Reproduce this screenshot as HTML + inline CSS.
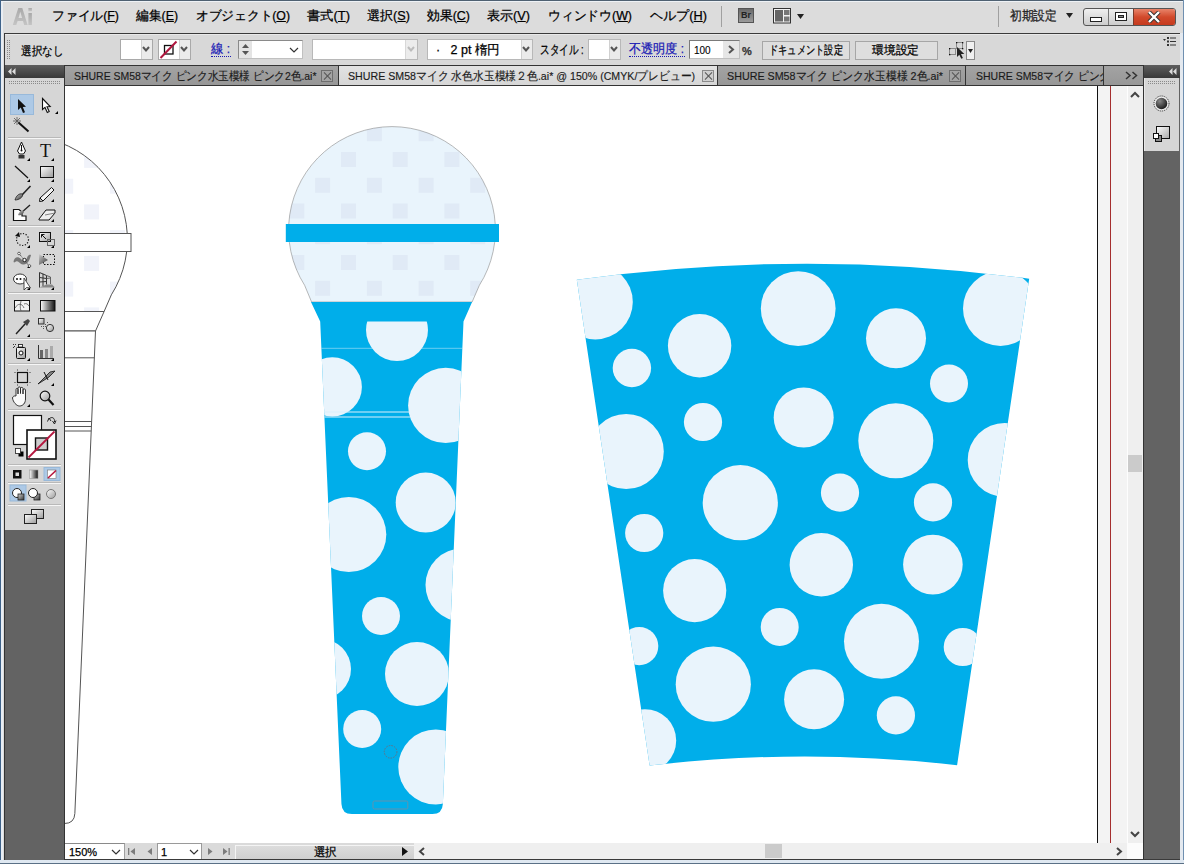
<!DOCTYPE html>
<html><head><meta charset="utf-8">
<style>
*{margin:0;padding:0;box-sizing:border-box}
html,body{width:1184px;height:864px;overflow:hidden;background:#dadada;font-family:"Liberation Sans",sans-serif;font-size:12px;color:#111}
.a{position:absolute}
.menu{top:9px;font-size:12.6px;color:#000;-webkit-text-stroke:0.25px #000;white-space:nowrap;line-height:15px}
.menu u{text-decoration:underline}
.tab{top:66px;height:19px;font-size:11.8px;color:#1a1a1a;-webkit-text-stroke:0.15px #1a1a1a;white-space:nowrap;overflow:hidden;line-height:20px}
.f{display:inline-block;transform-origin:0 50%;white-space:nowrap}
.cls{position:absolute;top:4px;width:12px;height:12px;border:1px solid #6e6e6e;background:#a4a4a4}
.cls:before,.cls:after{content:"";position:absolute;left:5px;top:0px;width:1px;height:10px;background:#555;transform:rotate(45deg)}
.cls:after{transform:rotate(-45deg)}
.hdr{background:linear-gradient(#5e5e5e,#383838)}
.wbox{background:#fff;border:1px solid #a9a9a9}
.dd{background:#ebebeb}
.lbl{font-size:12px;white-space:nowrap;line-height:14px;color:#000;-webkit-text-stroke:0.25px currentColor}
.blue{color:#1a1ab4;border-bottom:1px dotted #1a1ab4}
.btn{background:#dedede;border:1px solid #a6a6a6;text-align:center;font-size:12px;line-height:17px;color:#000;-webkit-text-stroke:0.25px #000}
.grip{background:repeating-linear-gradient(180deg,transparent 0 1px,#d6d6d6 1px 2px),repeating-linear-gradient(90deg,#8a8a8a 0 1px,transparent 1px 2px)}
.sep{height:1px;background:#f4f4f4;border-top:1px solid #b8b8b8}
.tri{position:absolute;width:0;height:0;border-left:4px solid transparent;border-bottom:4px solid #000}
</style></head><body>
<!-- window frame -->
<div class="a" style="left:0;top:0;width:1184px;height:864px;background:#dcdcdc"></div>
<div class="a" style="left:0;top:0;width:1184px;height:1px;background:#4f6172"></div>
<div class="a" style="left:0;top:0;width:1px;height:864px;background:#3e6289"></div>
<div class="a" style="left:1px;top:1px;width:2px;height:862px;background:#e8edf3"></div>
<div class="a" style="left:1px;top:1px;width:1182px;height:1px;background:#eef2f6"></div>
<div class="a" style="left:1180px;top:33px;width:3px;height:830px;background:#e4e9ef"></div>
<div class="a" style="left:1183px;top:0;width:1px;height:864px;background:#6f8fb0"></div>
<div class="a" style="left:0;top:860px;width:1184px;height:3px;background:#dfe8f1"></div>
<div class="a" style="left:0;top:863px;width:1184px;height:1px;background:#5a7086"></div>

<!-- menu bar -->
<svg class="a" style="left:12px;top:7px" width="24" height="20" viewBox="0 0 24 20">
<defs><linearGradient id="aig" x1="0" y1="0" x2="0" y2="1"><stop offset="0" stop-color="#a9a9a9"/><stop offset="1" stop-color="#c4c4c4"/></linearGradient></defs>
<path d="M0.8 18 L6.3 1 L10.3 1 L15.6 18 L12.2 18 L11 14 L5.6 14 L4.3 18Z M6.5 11 L10.1 11 L8.3 4.8Z" fill="url(#aig)"/>
<rect x="16.4" y="6" width="3.5" height="12" fill="url(#aig)"/>
<rect x="16.4" y="1" width="3.5" height="3.2" fill="url(#aig)"/>
</svg>
<div class="a menu" style="left:52px"><span class="f" id="m1" style="transform:scaleX(0.9837)">ファイル(<u>F</u>)</span></div>
<div class="a menu" style="left:136px"><span class="f" id="m2" style="transform:scaleX(0.9810)">編集(<u>E</u>)</span></div>
<div class="a menu" style="left:196px"><span class="f" id="m3" style="transform:scaleX(0.9771)">オブジェクト(<u>O</u>)</span></div>
<div class="a menu" style="left:307px"><span class="f" id="m4" style="transform:scaleX(1.0212)">書式(<u>T</u>)</span></div>
<div class="a menu" style="left:367px"><span class="f" id="m5" style="transform:scaleX(1.0044)">選択(<u>S</u>)</span></div>
<div class="a menu" style="left:427px"><span class="f" id="m6" style="transform:scaleX(0.9882)">効果(<u>C</u>)</span></div>
<div class="a menu" style="left:487px"><span class="f" id="m7" style="transform:scaleX(1.0044)">表示(<u>V</u>)</span></div>
<div class="a menu" style="left:548px"><span class="f" id="m8" style="transform:scaleX(0.9848)">ウィンドウ(<u>W</u>)</span></div>
<div class="a menu" style="left:650px"><span class="f" id="m9" style="transform:scaleX(1.0086)">ヘルプ(<u>H</u>)</span></div>
<div class="a" style="left:721px;top:6px;width:1px;height:21px;background:#a0a0a0"></div>
<!-- Br icon -->
<div class="a" style="left:738px;top:8px;width:16px;height:15px;background:linear-gradient(#6a6a6a,#9a9a9a);border:1px solid #555;color:#222;font-size:9px;font-weight:bold;line-height:13px;text-align:center">Br</div>
<!-- layout icon -->
<svg class="a" style="left:773px;top:8px" width="33" height="16" viewBox="0 0 33 16">
<rect x="0.5" y="0.5" width="17" height="14.5" fill="#f2f2f2" stroke="#333"/>
<rect x="2" y="2" width="8" height="11.5" fill="#666"/>
<rect x="11" y="2" width="5.5" height="5" fill="#777"/>
<rect x="11" y="8.5" width="5.5" height="5" fill="#777"/>
<path d="M24 6 L31 6 L27.5 11Z" fill="#222"/>
</svg>
<div class="a" style="left:998px;top:6px;width:1px;height:21px;background:#a0a0a0"></div>
<div class="a menu" style="left:1010px;color:#333"><span class="f" id="m10" style="transform:scaleX(0.9038)">初期設定</span></div>
<svg class="a" style="left:1066px;top:13px" width="8" height="6"><path d="M0 0 L7 0 L3.5 5Z" fill="#222"/></svg>
<!-- window buttons -->
<div class="a" style="left:1083px;top:8px;width:93px;height:18px;border:1px solid #555;border-radius:3px;background:linear-gradient(#f0f0f0,#cdcdcd);overflow:hidden">
 <div class="a" style="left:24px;top:0;width:1px;height:16px;background:#777"></div>
 <div class="a" style="left:49px;top:0;width:42px;height:16px;background:linear-gradient(#e8846a,#d24a2c 50%,#c53a1e);border-left:1px solid #7a3a2a"></div>
 <div class="a" style="left:6px;top:8px;width:12px;height:5px;background:#fff;border:1px solid #222"></div>
 <div class="a" style="left:31px;top:3px;width:12px;height:9px;background:#fff;border:1px solid #222"></div>
 <div class="a" style="left:34px;top:6px;width:6px;height:3px;background:#888;border:1px solid #222"></div>
 <svg class="a" style="left:63px;top:2px" width="14" height="12" viewBox="0 0 14 12"><path d="M2 1 L12 11 M12 1 L2 11" stroke="#333" stroke-width="4.2"/><path d="M2 1 L12 11 M12 1 L2 11" stroke="#fff" stroke-width="2.4"/></svg>
</div>

<!-- control bar -->
<div class="a" style="left:4px;top:33px;width:1176px;height:32px;background:#d8d8d8;border-top:1px solid #3a3a3a;border-left:1px solid #3a3a3a"></div>
<div class="a" style="left:5px;top:34px;width:1175px;height:1px;background:#e9e9e9"></div>
<div class="a grip" style="left:7px;top:40px;width:4px;height:20px"></div>
<div class="a lbl" style="left:21px;top:44px"><span class="f" id="c1" style="transform:scaleX(0.8750)">選択なし</span></div>
<!-- fill swatch -->
<div class="a wbox" style="left:120px;top:39px;width:33px;height:21px"></div>
<div class="a dd" style="left:141px;top:40px;width:11px;height:19px;border-left:1px solid #d0d0d0"></div>
<svg class="a" style="left:142px;top:46px" width="8" height="7"><path d="M1 1 L4 4.5 L7 1" stroke="#555" stroke-width="2" fill="none"/></svg>
<!-- stroke swatch -->
<div class="a wbox" style="left:158px;top:39px;width:33px;height:21px"></div>
<div class="a dd" style="left:179px;top:40px;width:11px;height:19px;border-left:1px solid #d0d0d0"></div>
<svg class="a" style="left:180px;top:46px" width="8" height="7"><path d="M1 1 L4 4.5 L7 1" stroke="#555" stroke-width="2" fill="none"/></svg>
<svg class="a" style="left:159px;top:40px" width="20" height="19" viewBox="0 0 20 19">
<rect x="5.5" y="5.5" width="8.5" height="8.5" fill="none" stroke="#111" stroke-width="1.3"/>
<path d="M1.5 18 L17.5 1.5" stroke="#b0163e" stroke-width="2"/>
</svg>
<div class="a lbl blue" style="left:211px;top:43px;font-size:12.5px;line-height:13px;width:20px"><span class="f" id="c2" style="transform:scaleX(0.9522)">線 :</span></div>
<!-- stroke weight -->
<div class="a wbox" style="left:238px;top:40px;width:65px;height:19px;border-color:#8a8a8a #c0c0c0 #c0c0c0 #8a8a8a"></div>
<div class="a dd" style="left:239px;top:41px;width:13px;height:17px;background:#e4e4e4"></div>
<svg class="a" style="left:241px;top:43px" width="9" height="13"><path d="M1 5 L4.5 1 L8 5Z M1 8 L8 8 L4.5 12Z" fill="#555"/></svg>
<svg class="a" style="left:289px;top:47px" width="10" height="7"><path d="M1 1 L5 5 L9 1" stroke="#333" stroke-width="1.2" fill="none"/></svg>
<!-- brush combo -->
<div class="a wbox" style="left:312px;top:39px;width:106px;height:21px;border-color:#b8b8b8"></div>
<div class="a dd" style="left:405px;top:40px;width:12px;height:19px;border-left:1px solid #d8d8d8;background:#ececec"></div>
<svg class="a" style="left:407px;top:46px" width="8" height="7"><path d="M1 1 L4 4.5 L7 1" stroke="#bcbcbc" stroke-width="2" fill="none"/></svg>
<!-- brush definition -->
<div class="a wbox" style="left:427px;top:39px;width:106px;height:21px;border-color:#b8b8b8"></div>
<div class="a dd" style="left:521px;top:40px;width:11px;height:19px;border-left:1px solid #d0d0d0"></div>
<svg class="a" style="left:522px;top:46px" width="8" height="7"><path d="M1 1 L4 4.5 L7 1" stroke="#555" stroke-width="2" fill="none"/></svg>
<div class="a lbl" style="left:436px;top:43px;font-size:13px"><span class="f" id="c3" style="transform:scaleX(0.9629)">·&nbsp;&nbsp; 2 pt 楕円</span></div>
<div class="a lbl" style="left:540px;top:43px;font-size:12.5px"><span class="f" id="c4" style="transform:scaleX(0.7396)">スタイル :</span></div>
<div class="a wbox" style="left:588px;top:39px;width:33px;height:21px;border-color:#b8b8b8"></div>
<div class="a dd" style="left:609px;top:40px;width:11px;height:19px;border-left:1px solid #d0d0d0"></div>
<svg class="a" style="left:610px;top:46px" width="8" height="7"><path d="M1 1 L4 4.5 L7 1" stroke="#555" stroke-width="2" fill="none"/></svg>
<div class="a lbl blue" style="left:629px;top:43px;font-size:12.5px;line-height:13px;width:56px"><span class="f" id="c5" style="transform:scaleX(0.9329)">不透明度 :</span></div>
<div class="a wbox" style="left:689px;top:40px;width:51px;height:19px;border-color:#7a7a7a #c0c0c0 #c0c0c0 #7a7a7a"></div>
<div class="a dd" style="left:723px;top:41px;width:16px;height:17px;background:#e6e6e6"></div>
<svg class="a" style="left:728px;top:45px" width="7" height="9"><path d="M1 1 L5 4.5 L1 8" stroke="#555" stroke-width="2" fill="none"/></svg>
<div class="a lbl" style="left:694px;top:44px;font-size:10px;-webkit-text-stroke:0.1px #000">100</div>
<div class="a lbl" style="left:742px;top:44px;font-size:11px;font-weight:bold;color:#333">%</div>
<div class="a btn" style="left:762px;top:41px;width:88px;height:19px;white-space:nowrap;text-align:left;padding-left:6px"><span class="f" id="c6" style="transform:scaleX(0.7708)">ドキュメント設定</span></div>
<div class="a btn" style="left:855px;top:41px;width:83px;height:19px;text-align:left;padding-left:16px"><span class="f" id="c7" style="transform:scaleX(0.9792)">環境設定</span></div>
<!-- isolate icon -->
<svg class="a" style="left:948px;top:41px" width="28" height="19" viewBox="0 0 28 19">
<rect x="1.5" y="7.5" width="6" height="6" fill="none" stroke="#8a8a8a"/>
<rect x="8.5" y="1.5" width="6" height="6" fill="none" stroke="#8a8a8a"/>
<g fill="#111"><rect x="1" y="7" width="1.3" height="1.3"/><rect x="1" y="13" width="1.3" height="1.3"/><rect x="8" y="1" width="1.3" height="1.3"/><rect x="14" y="1" width="1.3" height="1.3"/><rect x="14" y="7" width="1.3" height="1.3"/></g>
<path d="M9 6 L9 16 L11.3 13.8 L13.3 17.8 L14.9 17 L13 13 L16.3 13Z" fill="#222"/>
<rect x="18.5" y="0.5" width="8" height="18" fill="#f0f0f0" stroke="#8a8a8a"/>
<path d="M20 8 L25 8 L22.5 12Z" fill="#222"/>
</svg>
<!-- panel menu icon -->
<svg class="a" style="left:1163px;top:36px" width="14" height="10" viewBox="0 0 14 10">
<path d="M0 3 L3 3 L1.5 5Z" fill="#333"/>
<rect x="4" y="1" width="2" height="2" fill="#333"/><rect x="7" y="1.5" width="6" height="1" fill="#333"/>
<rect x="4" y="4.5" width="2" height="2" fill="#333"/><rect x="7" y="5" width="6" height="1" fill="#333"/>
<rect x="4" y="8" width="2" height="2" fill="#333"/><rect x="7" y="8.5" width="6" height="1" fill="#333"/>
</svg>

<!-- tabs -->
<div class="a" style="left:65px;top:65px;width:1079px;height:21px;background:#333"></div>
<div class="a tab" style="left:65px;width:273px;background:linear-gradient(#a3a3a3,#979797)"><span class="f" id="t1" style="transform:scaleX(0.8865);margin-left:9px">SHURE SM58マイク ピンク水玉模様 ピンク2色.ai*</span><div class="cls" style="left:256px"></div></div>
<div class="a tab" style="left:339px;width:378px;background:linear-gradient(#e2e2e2,#d6d6d6)"><span class="f" id="t2" style="transform:scaleX(0.9015);margin-left:9px">SHURE SM58マイク 水色水玉模様２色.ai* @ 150% (CMYK/プレビュー)</span><div class="cls" style="left:363px;background:#d0d0d0;border-color:#8a8a8a"></div></div>
<div class="a tab" style="left:718px;width:247px;background:linear-gradient(#a3a3a3,#979797)"><span class="f" id="t3" style="transform:scaleX(0.9092);margin-left:9px">SHURE SM58マイク ピンク水玉模様 2色.ai*</span><div class="cls" style="left:231px"></div></div>
<div class="a tab" style="left:966px;width:137px;background:linear-gradient(#a3a3a3,#979797)"><span class="f" id="t4" style="transform:scaleX(0.8893);margin-left:10px">SHURE SM58マイク ピンク</span></div>
<div class="a tab" style="left:1104px;width:39px;background:linear-gradient(#a3a3a3,#979797)"></div>
<svg class="a" style="left:1125px;top:71px" width="14" height="9" viewBox="0 0 14 9"><path d="M1 1 L5 4.5 L1 8 M7.5 1 L11.5 4.5 L7.5 8" stroke="#333" stroke-width="1.5" fill="none"/></svg>

<!-- left tools panel -->
<div class="a" style="left:4px;top:65px;width:61px;height:795px;background:#636363;border-left:1px solid #333;border-right:1px solid #333"></div>
<div class="a hdr" style="left:5px;top:65px;width:59px;height:13px"></div>
<svg class="a" style="left:8px;top:68px" width="8" height="7"><path d="M3.5 0 L0 3.5 L3.5 7Z M7.5 0 L4 3.5 L7.5 7Z" fill="#ddd"/></svg>
<div class="a" style="left:5px;top:78px;width:59px;height:452px;background:#d6d6d6"></div>
<div class="a grip" style="left:9px;top:81px;width:52px;height:4px"></div>

<!-- right panel -->
<div class="a" style="left:1143px;top:65px;width:37px;height:795px;background:#636363;border-left:1px solid #333"></div>
<div class="a hdr" style="left:1144px;top:65px;width:36px;height:13px"></div>
<svg class="a" style="left:1169px;top:68px" width="8" height="7"><path d="M3.5 0 L0 3.5 L3.5 7Z M7.5 0 L4 3.5 L7.5 7Z" fill="#ddd"/></svg>
<div class="a" style="left:1144px;top:78px;width:35px;height:73px;background:#d6d6d6;border-left:1px solid #e8e8e8"></div>
<div class="a grip" style="left:1148px;top:81px;width:28px;height:4px"></div>

<!-- canvas -->
<div class="a" style="left:65px;top:86px;width:1078px;height:757px;background:#fff"></div>
<div class="a" style="left:1098px;top:86px;width:30px;height:757px;background:#f3f3f3"></div>
<div class="a" style="left:1097px;top:86px;width:1px;height:757px;background:#111"></div>
<div class="a" style="left:1110px;top:86px;width:1px;height:757px;background:#a52e2e"></div>
<div class="a" style="left:1127px;top:86px;width:1px;height:757px;background:#fdfdfd"></div>
<div class="a" style="left:1128px;top:86px;width:15px;height:773px;background:#efefef"></div>
<svg class="a" style="left:1130px;top:91px" width="10" height="7"><path d="M1 6 L5 2 L9 6" stroke="#444" stroke-width="2" fill="none"/></svg>
<svg class="a" style="left:1130px;top:831px" width="10" height="7"><path d="M1 1 L5 5 L9 1" stroke="#444" stroke-width="2" fill="none"/></svg>
<div class="a" style="left:1128px;top:455px;width:14px;height:17px;background:#cbcbcb"></div>
<!-- artwork -->
<svg class="a" style="left:65px;top:86px" width="1062" height="757" viewBox="65 86 1062 757">
<defs>
<clipPath id="cup"><path d="M576.8 279.8 A1655 1655 0 0 1 1029.2 278.7 L957.1 765.2 A1345 1345 0 0 0 649.6 765.5 Z"/></clipPath>
</defs>
<g clip-path="url(#cup)">
<rect x="560" y="250" width="480" height="530" fill="#00aeea"/>
<g fill="#e9f4fc">
<circle cx="595.3" cy="301.9" r="37.5"/>
<circle cx="699.6" cy="345.8" r="31.7"/>
<circle cx="631.9" cy="368" r="19.2"/>
<circle cx="703" cy="422" r="19.1"/>
<circle cx="626.2" cy="451.5" r="37.6"/>
<circle cx="798.2" cy="308.6" r="37.4"/>
<circle cx="896" cy="338.3" r="30"/>
<circle cx="949" cy="383.5" r="19"/>
<circle cx="803.7" cy="417.5" r="30"/>
<circle cx="895.8" cy="440.8" r="37.5"/>
<circle cx="1000.5" cy="308.4" r="37.5"/>
<circle cx="740.3" cy="502.7" r="37.6"/>
<circle cx="644.2" cy="533" r="19.1"/>
<circle cx="694.7" cy="590.6" r="31.6"/>
<circle cx="840" cy="492.7" r="19.1"/>
<circle cx="933" cy="502.4" r="19.1"/>
<circle cx="821.3" cy="564.8" r="31.7"/>
<circle cx="932.9" cy="564.6" r="29.8"/>
<circle cx="1004.7" cy="459.9" r="37"/>
<circle cx="639.2" cy="646.1" r="19.1"/>
<circle cx="779.7" cy="626.9" r="19"/>
<circle cx="713.3" cy="684.2" r="37.6"/>
<circle cx="644.9" cy="740.5" r="31.3"/>
<circle cx="814.1" cy="699.2" r="30"/>
<circle cx="881.5" cy="641.3" r="37.5"/>
<circle cx="962.8" cy="647" r="19.1"/>
<circle cx="895.9" cy="715.4" r="19.1"/>
</g>
</g>

<clipPath id="hco"><path d="M-56.4,311.5 L-63.37,294.8 A103.4 103.4 0 1 1 111.37,294.8 L104.1,311.5 Z"/></clipPath>
<path d="M-56.4,311.5 L-63.37,294.8 A103.4 103.4 0 1 1 111.37,294.8 L104.1,311.5 Z" fill="#ffffff"/>
<g clip-path="url(#hco)" fill="#f1f3fa">
<rect x="-19.3" y="101.4" width="15" height="15"/>
<rect x="32.4" y="101.4" width="15" height="15"/>
<rect x="84.1" y="101.4" width="15" height="15"/>
<rect x="135.8" y="101.4" width="15" height="15"/>
<rect x="187.5" y="101.4" width="15" height="15"/>
<rect x="-45.2" y="127.2" width="15" height="15"/>
<rect x="6.5" y="127.2" width="15" height="15"/>
<rect x="58.2" y="127.2" width="15" height="15"/>
<rect x="110.0" y="127.2" width="15" height="15"/>
<rect x="161.6" y="127.2" width="15" height="15"/>
<rect x="-19.3" y="152.9" width="15" height="15"/>
<rect x="32.4" y="152.9" width="15" height="15"/>
<rect x="84.1" y="152.9" width="15" height="15"/>
<rect x="135.8" y="152.9" width="15" height="15"/>
<rect x="187.5" y="152.9" width="15" height="15"/>
<rect x="-45.2" y="178.7" width="15" height="15"/>
<rect x="6.5" y="178.7" width="15" height="15"/>
<rect x="58.2" y="178.7" width="15" height="15"/>
<rect x="110.0" y="178.7" width="15" height="15"/>
<rect x="161.6" y="178.7" width="15" height="15"/>
<rect x="-19.3" y="204.4" width="15" height="15"/>
<rect x="32.4" y="204.4" width="15" height="15"/>
<rect x="84.1" y="204.4" width="15" height="15"/>
<rect x="135.8" y="204.4" width="15" height="15"/>
<rect x="187.5" y="204.4" width="15" height="15"/>
<rect x="-45.2" y="230.1" width="15" height="15"/>
<rect x="6.5" y="230.1" width="15" height="15"/>
<rect x="58.2" y="230.1" width="15" height="15"/>
<rect x="110.0" y="230.1" width="15" height="15"/>
<rect x="161.6" y="230.1" width="15" height="15"/>
<rect x="-19.3" y="255.9" width="15" height="15"/>
<rect x="32.4" y="255.9" width="15" height="15"/>
<rect x="84.1" y="255.9" width="15" height="15"/>
<rect x="135.8" y="255.9" width="15" height="15"/>
<rect x="187.5" y="255.9" width="15" height="15"/>
<rect x="-45.2" y="281.6" width="15" height="15"/>
<rect x="6.5" y="281.6" width="15" height="15"/>
<rect x="58.2" y="281.6" width="15" height="15"/>
<rect x="110.0" y="281.6" width="15" height="15"/>
<rect x="161.6" y="281.6" width="15" height="15"/>
<rect x="-19.3" y="307.4" width="15" height="15"/>
<rect x="32.4" y="307.4" width="15" height="15"/>
<rect x="84.1" y="307.4" width="15" height="15"/>
<rect x="135.8" y="307.4" width="15" height="15"/>
<rect x="187.5" y="307.4" width="15" height="15"/>
</g>
<path d="M-56.4,311.5 L-63.37,294.8 A103.4 103.4 0 1 1 111.37,294.8 L104.1,311.5 Z" fill="none" stroke="#555" stroke-width="1"/>
<rect x="-82.2" y="233.5" width="213.2" height="18" fill="#fff" stroke="#555" stroke-width="1"/>
<path d="M-57,311.5 L104.1,311.5 L95.5,331.0 L-47.8,331.0Z" fill="#fff" stroke="#555" stroke-width="1"/>
<path d="M-47.8,331.0 L95.5,331.0 L74.85000000000001,813.5 Q74.4,823.5 64.4,823.5 L-16.1,823.5 Q-26.1,823.5 -26.55,813.5 Z" fill="#fff" stroke="#555" stroke-width="1"/>
<clipPath id="bodyo"><path d="M-47.8,331.0 L95.5,331.0 L74.85000000000001,813.5 Q74.4,823.5 64.4,823.5 L-16.1,823.5 Q-26.1,823.5 -26.55,813.5 Z"/></clipPath>
<g clip-path="url(#bodyo)">
<line x1="-68" y1="357.8" x2="102" y2="357.8" stroke="#555" stroke-width="1"/>
<line x1="-68" y1="421.5" x2="102" y2="421.5" stroke="#555" stroke-width="1"/>
<line x1="-68" y1="426.5" x2="102" y2="426.5" stroke="#555" stroke-width="1"/>
<line x1="-68" y1="431.0" x2="102" y2="431.0" stroke="#555" stroke-width="1"/>
</g>
<clipPath id="hcc"><path d="M311.6,302 L304.63,285.3 A103.4 103.4 0 1 1 479.37,285.3 L472.1,302 Z"/></clipPath>
<path d="M311.6,302 L304.63,285.3 A103.4 103.4 0 1 1 479.37,285.3 L472.1,302 Z" fill="#e9f4fc"/>
<g clip-path="url(#hcc)" fill="#e0eaf6">
<rect x="289.3" y="100.5" width="15" height="15"/>
<rect x="341.0" y="100.5" width="15" height="15"/>
<rect x="392.7" y="100.5" width="15" height="15"/>
<rect x="444.4" y="100.5" width="15" height="15"/>
<rect x="496.1" y="100.5" width="15" height="15"/>
<rect x="263.4" y="126.2" width="15" height="15"/>
<rect x="315.1" y="126.2" width="15" height="15"/>
<rect x="366.9" y="126.2" width="15" height="15"/>
<rect x="418.6" y="126.2" width="15" height="15"/>
<rect x="470.2" y="126.2" width="15" height="15"/>
<rect x="289.3" y="152.0" width="15" height="15"/>
<rect x="341.0" y="152.0" width="15" height="15"/>
<rect x="392.7" y="152.0" width="15" height="15"/>
<rect x="444.4" y="152.0" width="15" height="15"/>
<rect x="496.1" y="152.0" width="15" height="15"/>
<rect x="263.4" y="177.8" width="15" height="15"/>
<rect x="315.1" y="177.8" width="15" height="15"/>
<rect x="366.9" y="177.8" width="15" height="15"/>
<rect x="418.6" y="177.8" width="15" height="15"/>
<rect x="470.2" y="177.8" width="15" height="15"/>
<rect x="289.3" y="203.5" width="15" height="15"/>
<rect x="341.0" y="203.5" width="15" height="15"/>
<rect x="392.7" y="203.5" width="15" height="15"/>
<rect x="444.4" y="203.5" width="15" height="15"/>
<rect x="496.1" y="203.5" width="15" height="15"/>
<rect x="263.4" y="229.2" width="15" height="15"/>
<rect x="315.1" y="229.2" width="15" height="15"/>
<rect x="366.9" y="229.2" width="15" height="15"/>
<rect x="418.6" y="229.2" width="15" height="15"/>
<rect x="470.2" y="229.2" width="15" height="15"/>
<rect x="289.3" y="255.0" width="15" height="15"/>
<rect x="341.0" y="255.0" width="15" height="15"/>
<rect x="392.7" y="255.0" width="15" height="15"/>
<rect x="444.4" y="255.0" width="15" height="15"/>
<rect x="496.1" y="255.0" width="15" height="15"/>
<rect x="263.4" y="280.8" width="15" height="15"/>
<rect x="315.1" y="280.8" width="15" height="15"/>
<rect x="366.9" y="280.8" width="15" height="15"/>
<rect x="418.6" y="280.8" width="15" height="15"/>
<rect x="470.2" y="280.8" width="15" height="15"/>
<rect x="289.3" y="306.5" width="15" height="15"/>
<rect x="341.0" y="306.5" width="15" height="15"/>
<rect x="392.7" y="306.5" width="15" height="15"/>
<rect x="444.4" y="306.5" width="15" height="15"/>
<rect x="496.1" y="306.5" width="15" height="15"/>
</g>
<path d="M311.6,302 L304.63,285.3 A103.4 103.4 0 1 1 479.37,285.3 L472.1,302 Z" fill="none" stroke="#8a8a8a" stroke-width="0.6"/>
<rect x="285.8" y="224" width="213.2" height="18" fill="#00aeea"/>
<path d="M311,302 L472.1,302 L463.5,321.5 L442.84999999999997,804 Q442.4,814 432.4,814 L351.9,814 Q341.9,814 341.45,804 L320.2,321.5 Z" fill="#00aeea"/>
<clipPath id="bodyc"><path d="M320.2,321.5 L463.5,321.5 L442.84999999999997,804 Q442.4,814 432.4,814 L351.9,814 Q341.9,814 341.45,804 Z"/></clipPath>
<g clip-path="url(#bodyc)" fill="#e9f4fc">
<circle cx="397" cy="330" r="31"/>
<circle cx="332.3" cy="386.9" r="29.6"/>
<circle cx="445.7" cy="405.4" r="37.6"/>
<circle cx="367" cy="451.2" r="19"/>
<circle cx="425.7" cy="502.6" r="30"/>
<circle cx="348.8" cy="534.5" r="37.5"/>
<circle cx="462" cy="585" r="36.5"/>
<circle cx="381" cy="616" r="19"/>
<circle cx="321" cy="669" r="30"/>
<circle cx="417" cy="674" r="32"/>
<circle cx="362.2" cy="729" r="19"/>
<circle cx="435.8" cy="767" r="37.5"/>
<rect x="300" y="347.8" width="200" height="1" fill="#e9f4fc" opacity="0.45"/>
<rect x="300" y="411.5" width="110" height="1" fill="#d9f0fb"/>
<rect x="300" y="416.5" width="110" height="1" fill="#d9f0fb"/>
</g>
<circle cx="390.6" cy="751.8" r="6.3" fill="none" stroke="#5f7489" stroke-width="1" stroke-dasharray="1.6 1.1"/>
<rect x="373" y="801" width="34.8" height="8" rx="1.5" fill="none" stroke="#6f8fa6" stroke-width="0.9"/>
</svg>
<svg class="a" style="left:5px;top:78px" width="59" height="452" viewBox="5 78 59 452">
<defs>
<linearGradient id="gw" x1="0" y1="0" x2="1" y2="1"><stop offset="0" stop-color="#fff"/><stop offset="1" stop-color="#9a9a9a"/></linearGradient>
<linearGradient id="gh" x1="0" y1="0" x2="1" y2="0"><stop offset="0" stop-color="#fff"/><stop offset="1" stop-color="#111"/></linearGradient>
<linearGradient id="gd" x1="0" y1="0" x2="1" y2="1"><stop offset="0" stop-color="#cfcfcf"/><stop offset="1" stop-color="#333"/></linearGradient>
</defs>
<!-- separators -->
<g fill="#f6f6f6"><rect x="8" y="138" width="53" height="1"/><rect x="8" y="226" width="53" height="1"/><rect x="8" y="293" width="53" height="1"/><rect x="8" y="339" width="53" height="1"/><rect x="8" y="364" width="53" height="1"/><rect x="8" y="410" width="53" height="1"/><rect x="8" y="465" width="53" height="1"/><rect x="8" y="483" width="53" height="1"/><rect x="8" y="505" width="53" height="1"/></g>
<g fill="#b9b9b9"><rect x="8" y="137" width="53" height="1"/><rect x="8" y="225" width="53" height="1"/><rect x="8" y="292" width="53" height="1"/><rect x="8" y="338" width="53" height="1"/><rect x="8" y="363" width="53" height="1"/><rect x="8" y="409" width="53" height="1"/><rect x="8" y="464" width="53" height="1"/><rect x="8" y="482" width="53" height="1"/><rect x="8" y="504" width="53" height="1"/></g>
<!-- selection highlight -->
<rect x="10.5" y="94.5" width="23" height="20" fill="#adc9e6" stroke="#98b9da"/>
<path d="M18 99 L18 110 L20.8 107.6 L23 113 L25 112.2 L22.8 106.9 L26 106.8 Z" fill="#111"/>
<path d="M42.5 98.5 L42.5 109.5 L45 107.4 L47.3 112.5 L49.2 111.6 L47 106.7 L50.2 106.6 Z" fill="#fff" stroke="#111" stroke-width="1.1"/>
<!-- triangles -->
<g fill="#000">
<path d="M55 114 L58 111 L58 114Z"/>
<path d="M27 161 L30 158 L30 161Z"/><path d="M51 161 L54 158 L54 161Z"/>
<path d="M27 182 L30 179 L30 182Z"/><path d="M51 182 L54 179 L54 182Z"/>
<path d="M51 202 L54 199 L54 202Z"/>
<path d="M51 222 L54 219 L54 222Z"/>
<path d="M27 248 L30 245 L30 248Z"/><path d="M51 248 L54 245 L54 248Z"/>
<path d="M27 268 L30 265 L30 268Z"/>
<path d="M27 290 L30 287 L30 290Z"/><path d="M51 290 L54 287 L54 290Z"/>
<path d="M27 337 L30 334 L30 337Z"/>
<path d="M27 361 L30 358 L30 361Z"/><path d="M51 361 L54 358 L54 361Z"/>
<path d="M51 386 L54 383 L54 386Z"/>
<path d="M27 407 L30 404 L30 407Z"/>
</g>
<!-- magic wand -->
<g stroke="#222" stroke-width="1">
<path d="M13 121 L21 121 M17 117 L17 125 M14 118 L20 124 M20 118 L14 124" stroke="#555" stroke-width="0.8"/>
<path d="M18.5 122.5 L28.5 131.5" stroke="#111" stroke-width="2"/>
</g>
<!-- pen -->
<path d="M21.5 142 L25.5 151 L23.5 154 L19.5 154 L17.5 151 Z" fill="#fff" stroke="#111" stroke-width="1"/>
<path d="M21.5 145 L21.5 150" stroke="#111" stroke-width="1"/><circle cx="21.5" cy="150.5" r="1" fill="#111"/>
<rect x="18.5" y="155" width="6" height="3.5" fill="#333"/>
<!-- type -->
<text x="40" y="157" font-family="Liberation Serif" font-size="18" fill="#111">T</text>
<!-- line -->
<path d="M15 166 L28 178" stroke="#111" stroke-width="1.2"/>
<!-- rect -->
<rect x="40.5" y="166.5" width="13" height="11" fill="url(#gw)" stroke="#111"/>
<!-- brush -->
<path d="M30.5 186 L22 195" stroke="#222" stroke-width="1.6"/>
<path d="M15 200 C16 196 19 193 22.5 194 C23.5 197 19 200 15 200Z" fill="url(#gd)" stroke="#222" stroke-width="0.8"/>
<!-- pencil -->
<path d="M51.5 187.5 L54 190 L43 201 L39.5 201.5 L40 198 Z" fill="#f4f4f4" stroke="#111" stroke-width="1"/>
<path d="M40 198 L43 201" stroke="#111"/>
<!-- blob brush -->
<path d="M13.5 209.5 L19 209.5 L22 212 L22 216 L26 216 L26 220.5 L13.5 220.5 Z" fill="#fff" stroke="#111" stroke-width="1.2"/>
<path d="M30 205 L21 213" stroke="#222" stroke-width="1.4"/>
<path d="M18 215 C19 211 22 210 24 211 C24 214 21 216 18 215Z" fill="url(#gd)"/>
<!-- eraser -->
<path d="M39 219 L46 210 L55 210 L55 213 L49 220 L39 220Z" fill="#eee" stroke="#111" stroke-width="1"/>
<path d="M45 215 L55 213" stroke="#666" stroke-width="0.8"/>
<!-- rotate -->
<circle cx="22.5" cy="239.5" r="6" fill="none" stroke="#111" stroke-width="1.2" stroke-dasharray="1.2 1.6"/>
<path d="M15 236 L19 232 L20 237Z" fill="#111"/>
<!-- scale -->
<rect x="39.5" y="232.5" width="11" height="9" fill="url(#gw)" stroke="#111"/>
<rect x="47.5" y="239.5" width="7" height="6" fill="none" stroke="#666"/>
<path d="M41.5 234.5 L46 239 M41.5 234.5 L44.5 234.5 M41.5 234.5 L41.5 237.5" stroke="#111" stroke-width="1"/>
<!-- warp -->
<path d="M13.5 262 C14 257 18 256 21 259 C23 261.5 26 262 27 258 C27.5 255.5 29.5 254 31 255 C30 259 28 265 23 264.5 C19.5 264 18.5 260 16 261.5 C15 262 14.5 263 13.5 262Z" fill="#777"/>
<path d="M19 253.5 L30 267" stroke="#111" stroke-width="0.8" stroke-dasharray="1 1"/>
<circle cx="19" cy="253.5" r="1.3" fill="#fff" stroke="#111" stroke-width="0.6"/><circle cx="24.5" cy="260" r="1.7" fill="#fff" stroke="#111" stroke-width="0.9"/><circle cx="29.5" cy="266" r="1.3" fill="#fff" stroke="#111" stroke-width="0.6"/>
<!-- free transform -->
<rect x="43.5" y="254.5" width="11" height="10" fill="none" stroke="#111" stroke-dasharray="1.5 1.5"/>
<path d="M39 254 L39 265 L48 260Z" fill="url(#gd)"/>
<!-- shape builder -->
<ellipse cx="20" cy="279" rx="6.5" ry="5" fill="#fff" stroke="#333"/>
<circle cx="17" cy="279" r="1" fill="#111"/><circle cx="20.5" cy="279" r="1" fill="#111"/>
<path d="M24 278 L24 290 L26.5 287.5 L30.5 288 Z" fill="#fff" stroke="#222" stroke-width="0.8"/>
<!-- perspective grid -->
<path d="M39.5 272.5 L39.5 287.5 M39.5 272.5 L46.5 275.5 L46.5 284.5 M39.5 277.5 L46.5 278.5 M39.5 282 L46.5 281.5 M43 273.8 L43 286" fill="none" stroke="#333" stroke-width="1"/>
<path d="M46.5 275.5 L50.5 277 L50.5 284 M50.5 278 L46.5 278.5" fill="none" stroke="#555" stroke-width="0.9"/>
<path d="M39.5 287.5 L55 287.5 L52 284.5 L46.5 284.5Z" fill="#888"/>
<!-- mesh -->
<rect x="14.5" y="300.5" width="15" height="10.5" fill="#f2f2f2" stroke="#111"/>
<path d="M15 308 C18 303 22 303 24 308 M21 301 C20 305 20 308 21 311 M24 304 C26 303 28 304 29 306" fill="none" stroke="#555" stroke-width="0.8"/>
<!-- gradient -->
<rect x="40.5" y="300.5" width="14.5" height="10.5" fill="url(#gh)" stroke="#111"/>
<!-- eyedropper -->
<path d="M16 334 L25 324" stroke="#222" stroke-width="1.4"/>
<path d="M23 322 L28 319 L30 321 L27 326Z" fill="#444"/>
<!-- blend -->
<rect x="38.5" y="318.5" width="5.5" height="5.5" fill="url(#gw)" stroke="#333"/>
<circle cx="50" cy="328" r="3.6" fill="url(#gw)" stroke="#333"/>
<g fill="#555"><rect x="43" y="326" width="1" height="1"/><rect x="45" y="326" width="1" height="1"/><rect x="45" y="324" width="1" height="1"/><rect x="47" y="322" width="1" height="1"/><rect x="41" y="326" width="1" height="1"/><rect x="43" y="328" width="1" height="1"/></g>
<!-- symbol sprayer -->
<rect x="16.5" y="347.5" width="9" height="11" rx="1" fill="url(#gw)" stroke="#111"/>
<rect x="18.5" y="344.5" width="4" height="2.5" fill="#fff" stroke="#111" stroke-width="0.8"/>
<circle cx="21" cy="353" r="2" fill="#fff" stroke="#111"/>
<g fill="#333"><rect x="13" y="344" width="1" height="1"/><rect x="15" y="344" width="1" height="1"/><rect x="14" y="346" width="1" height="1"/><rect x="13" y="347" width="1" height="1"/></g>
<!-- column graph -->
<path d="M38.5 345 L38.5 358.5 L54 358.5" fill="none" stroke="#333"/>
<rect x="40" y="350" width="3" height="8" fill="#666"/><rect x="45" y="349" width="3" height="9" fill="#888"/><rect x="50" y="346" width="3" height="12" fill="#aaa"/>
<!-- artboard -->
<rect x="17.5" y="372.5" width="10" height="10" fill="none" stroke="#111" stroke-width="1.2"/>
<path d="M14 372.5 L16 372.5 M14 382.5 L16 382.5 M29 372.5 L31 372.5 M29 382.5 L31 382.5 M17.5 369 L17.5 371 M27.5 369 L27.5 371 M17.5 384 L17.5 386 M27.5 384 L27.5 386" stroke="#888"/>
<!-- slice -->
<path d="M38 384 L50 372 L55 371 L49 377 Z" fill="url(#gd)" stroke="#111" stroke-width="0.8"/>
<path d="M44 372 L48 380" stroke="#111" stroke-width="1"/>
<!-- hand -->
<path d="M16 396 L16 389.5 C16 388 18 388 18 389.5 L18 394 L18 388 C18 386.5 20.5 386.5 20.5 388 L20.5 393.5 L20.5 388.5 C20.5 387 23 387 23 388.5 L23 394 L23 390 C23 388.5 25.5 388.5 25.5 390 L25.5 399 C25.5 403 23 406 19.5 406 C16.5 406 13 402 12.5 398 C12.5 396.5 14.5 395.5 16 396Z" fill="#fafafa" stroke="#222" stroke-width="0.9"/>
<!-- zoom -->
<circle cx="45" cy="396" r="4.8" fill="url(#gw)" stroke="#111" stroke-width="1.2"/>
<path d="M48.5 399.5 L53.5 405" stroke="#111" stroke-width="2.2"/>
<!-- fill / stroke -->
<rect x="13.5" y="415.5" width="28" height="29" fill="#fff" stroke="#111" stroke-width="1.2"/>
<rect x="27" y="430" width="29" height="29" fill="#fff" stroke="#111" stroke-width="1.6"/>
<rect x="35.5" y="438" width="12" height="12" fill="#cdcdcd" stroke="#111" stroke-width="1.4"/>
<path d="M28.5 457.5 L54.5 431.5" stroke="#b5173f" stroke-width="1.8"/>
<path d="M49 419 C52 416 55 418 54.5 422 M47.5 421.5 L49 418 L51 421 M56 420.5 L54.5 424 L52.5 421" fill="none" stroke="#222" stroke-width="1"/>
<rect x="18.5" y="451.5" width="5" height="5" fill="#000"/><rect x="15.5" y="448.5" width="5" height="5" fill="#fff" stroke="#222" stroke-width="0.8"/>
<!-- color modes -->
<rect x="13" y="470" width="8.5" height="8.5" fill="#111"/><rect x="15.5" y="472.5" width="3.5" height="3.5" fill="#ddd"/>
<rect x="29.5" y="470" width="8.5" height="8.5" fill="url(#gh)" stroke="#999" stroke-width="0.6"/>
<rect x="44" y="467.5" width="16" height="13" fill="#adc9e6" stroke="#98b9da"/>
<rect x="47.5" y="470" width="8.5" height="8.5" fill="#fff" stroke="#777" stroke-width="0.6"/>
<path d="M48 478 L56 470.5" stroke="#b5173f" stroke-width="1.6"/>
<!-- draw modes -->
<rect x="10" y="485" width="16" height="16" fill="#adc9e6" stroke="#98b9da"/>
<circle cx="17" cy="493" r="4.5" fill="#fff" stroke="#222"/><rect x="18" y="494" width="6" height="6" fill="url(#gd)" stroke="#222" stroke-width="0.8"/>
<rect x="34" y="494" width="6" height="6" fill="url(#gd)" stroke="#222" stroke-width="0.8"/><circle cx="33" cy="493" r="4.5" fill="#fff" stroke="#222"/>
<circle cx="51" cy="494" r="4.5" fill="url(#gw)" stroke="#777"/>
<!-- screen mode -->
<rect x="31.5" y="509.5" width="12" height="9" fill="url(#gw)" stroke="#222"/>
<rect x="24.5" y="514.5" width="12" height="9" fill="url(#gw)" stroke="#222"/>
</svg>
<svg class="a" style="left:1145px;top:86px" width="34" height="64" viewBox="1145 86 34 64">
<defs><radialGradient id="rb" cx="0.35" cy="0.3" r="0.8"><stop offset="0" stop-color="#888"/><stop offset="1" stop-color="#111"/></radialGradient>
<linearGradient id="rw" x1="0" y1="0" x2="1" y2="1"><stop offset="0" stop-color="#fff"/><stop offset="1" stop-color="#aaa"/></linearGradient></defs>
<circle cx="1161.5" cy="103.5" r="7.5" fill="#eee" stroke="#222" stroke-width="1" stroke-dasharray="1 1"/>
<circle cx="1161.5" cy="103.5" r="5.8" fill="url(#rb)"/>
<rect x="1156.5" y="126.5" width="13" height="12" fill="url(#rw)" stroke="#111"/>
<rect x="1155.5" y="135.5" width="6" height="6" fill="#888" stroke="#111"/>
<rect x="1153.5" y="133.5" width="5" height="5" fill="#fff" stroke="#111"/>
</svg>
<!-- status bar -->
<div class="a" style="left:65px;top:843px;width:1063px;height:16px;background:#efefef"></div>
<div class="a" style="left:1127px;top:843px;width:16px;height:16px;background:#fcfcfc"></div>
<div class="a" style="left:65px;top:843px;width:349px;height:16px;background:#dadada"></div>
<div class="a" style="left:65px;top:843px;width:60px;height:16px;background:#fff;border-top:1px solid #8a8a8a;border-right:1px solid #a0a0a0"></div>
<div class="a lbl" style="left:69px;top:845px;font-size:11px">150%</div>
<svg class="a" style="left:111px;top:849px" width="10" height="7"><path d="M1 1 L5 5 L9 1" stroke="#333" stroke-width="1.2" fill="none"/></svg>
<svg class="a" style="left:127px;top:847px" width="106" height="10" viewBox="0 0 106 10">
<rect x="1" y="1" width="1.3" height="7" fill="#7c7c7c"/><path d="M8 1 L3.5 4.5 L8 8Z" fill="#7c7c7c"/>
<path d="M25 1 L20.5 4.5 L25 8Z" fill="#7c7c7c"/>
<path d="M81 1 L85.5 4.5 L81 8Z" fill="#7c7c7c"/>
<path d="M96 1 L100.5 4.5 L96 8Z" fill="#7c7c7c"/><rect x="101.5" y="1" width="1.3" height="7" fill="#7c7c7c"/>
</svg>
<div class="a" style="left:157px;top:843px;width:45px;height:16px;background:#fff;border:1px solid #9a9a9a;border-bottom:none"></div>
<div class="a lbl" style="left:161px;top:845px;font-size:11px">1</div>
<svg class="a" style="left:189px;top:849px" width="10" height="7"><path d="M1 1 L5 5 L9 1" stroke="#333" stroke-width="1.2" fill="none"/></svg>
<div class="a" style="left:235px;top:845px;width:179px;height:14px;background:linear-gradient(#dcdcdc,#cfcfcf);border-top:1px solid #f4f4f4;border-left:1px solid #f4f4f4"></div>
<div class="a lbl" style="left:314px;top:845px;font-size:12px"><span class="f" id="s1" style="transform:scaleX(0.9583)">選択</span></div>
<svg class="a" style="left:402px;top:847px" width="7" height="9"><path d="M0 0 L6 4.5 L0 9Z" fill="#111"/></svg>
<svg class="a" style="left:418px;top:847px" width="8" height="9"><path d="M6 1 L2 4.5 L6 8" stroke="#444" stroke-width="2" fill="none"/></svg>
<svg class="a" style="left:1115px;top:847px" width="8" height="9"><path d="M2 1 L6 4.5 L2 8" stroke="#444" stroke-width="2" fill="none"/></svg>
<div class="a" style="left:765px;top:844px;width:17px;height:14px;background:#cbcbcb"></div>
<div class="a" style="left:65px;top:859px;width:1115px;height:1px;background:#3a3a3a"></div>
</body></html>
